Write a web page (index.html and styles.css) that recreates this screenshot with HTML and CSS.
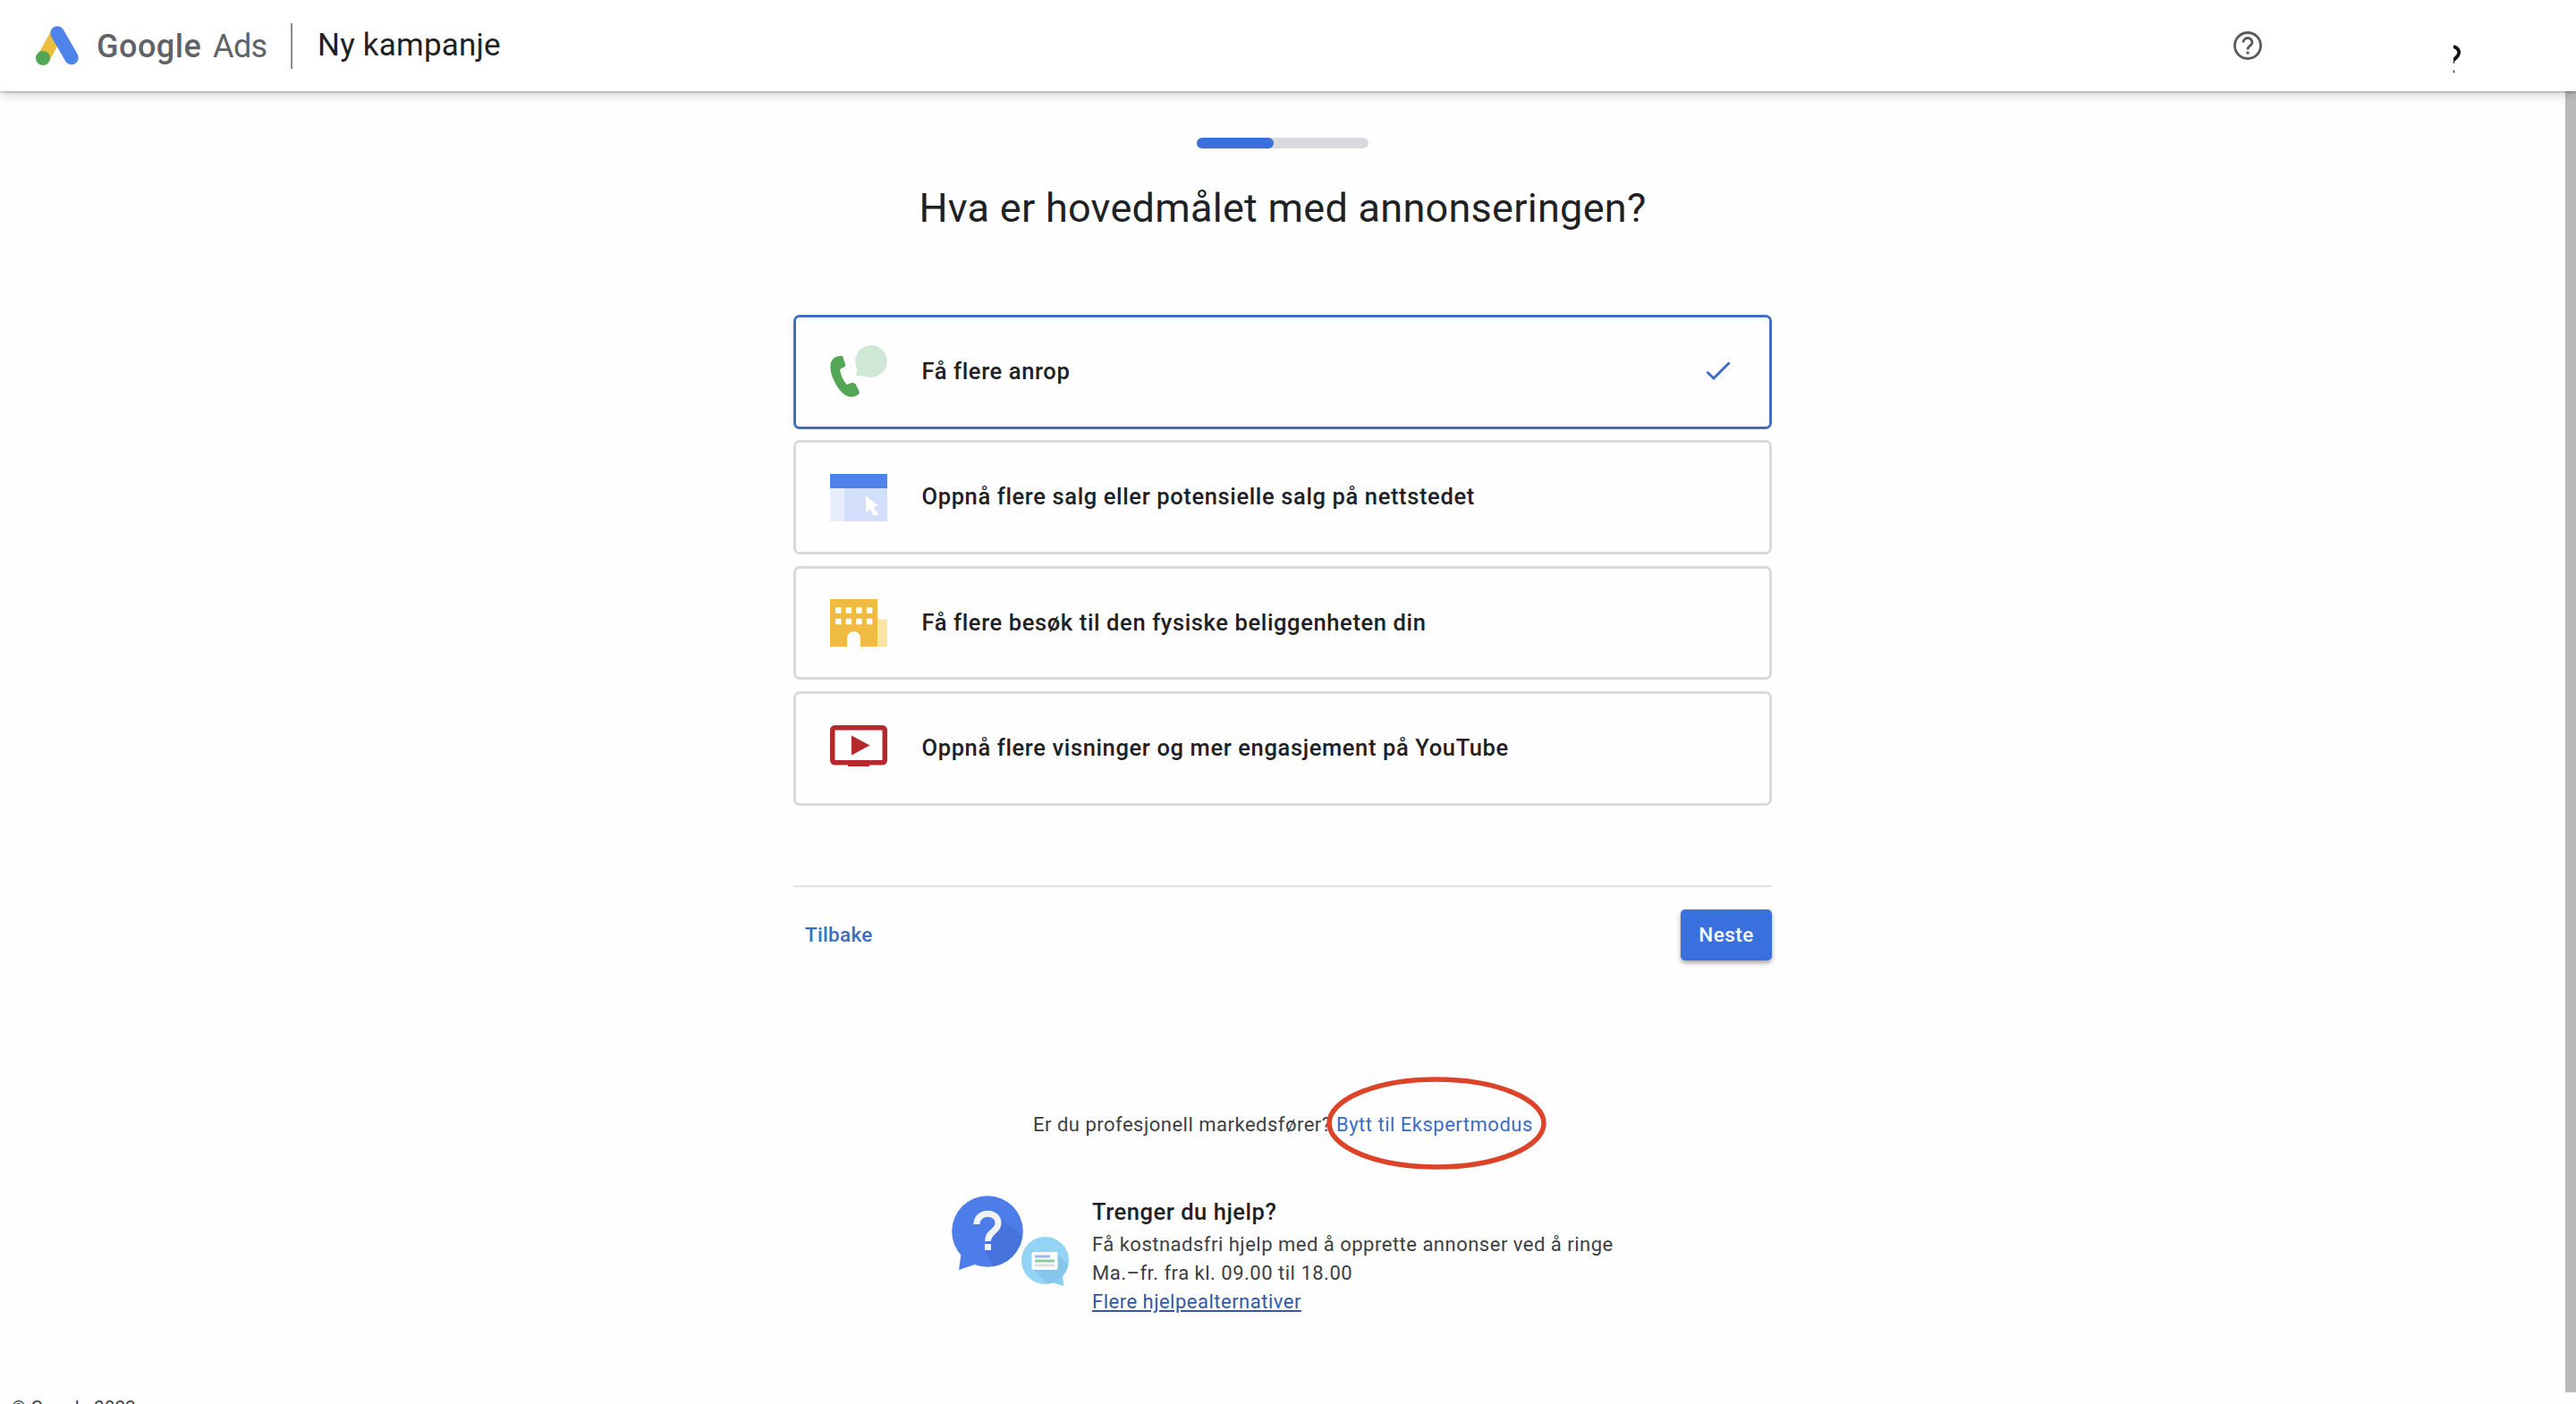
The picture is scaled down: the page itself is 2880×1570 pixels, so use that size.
FILE: index.html
```html
<!DOCTYPE html>
<html lang="no">
<head>
    <meta charset="UTF-8">
    <meta name="viewport" content="width=device-width, initial-scale=1.0">
    <title>Ny kampanje - Google Ads</title>
    <link rel="stylesheet" href="styles.css">
</head>
<body>
<header class="header">
    <svg class="logo" viewBox="0 0 48 44">
        <path d="M24 8 L8.500 36" stroke="#edbd3f" stroke-width="14.500"/>
        <circle cx="8" cy="36" r="8" fill="#53a653"/>
        <path d="M24 8 L40 35.500" stroke="#4f83ec" stroke-width="15.500" stroke-linecap="round"/>
    </svg>
    <span class="brand">Google</span>
    <span class="brand-ads">Ads</span>
    <span class="header-line"></span>
    <h1>Ny kampanje</h1>
    <svg class="help-icon" viewBox="0 0 32 32" fill="none" stroke="#58595c">
        <circle cx="16" cy="16" r="14.500" stroke-width="2.800"/>
        <path d="M11 12.500 A5 5 0 0 1 21 12.500 C21 15.700 16 16.200 16 20.500" stroke-width="2.800"/>
        <path d="M16 22.500 V25.500" stroke-width="3"/>
    </svg>
    <svg class="help-cut" viewBox="0 0 8 34" fill="none" stroke="#111">
        <path d="M0 3 C7 5 8 11 3 15.500 L0 18.500" stroke-width="3.800"/>
        <path d="M.5 18 V22 M.5 29.500 V32.500" stroke-width="1"/>
    </svg>
</header>
<div class="scrollbar"></div>
<main class="content">
    <div class="progress"><div class="progress-done"></div></div>
    <h2>Hva er hovedmålet med annonseringen?</h2>
    <div class="goals">
        <div class="goal selected">
            <svg class="goal-icon" viewBox="0 0 64 64">
                <path d="M45 2 A18 18 0 1 1 40 37 L29 36 L30.500 29 A18 18 0 0 1 45 2 Z" fill="#cfe8d5"/>
                <path d="M11 14 Q13.500 13 14.500 15.500 L17 23 Q18 25.500 15.500 26.500 L11 29 Q12 38 18.500 46 L24.500 44 Q27 43.500 28.500 45.500 L32.500 53.500 Q33.500 56 31 57.500 C24 62 17 60 10 51 C2 40 -1 29 1 21 Q3 15 11 14 Z" fill="#53a653"/>
            </svg>
            <span class="goal-text">Få flere anrop</span>
            <svg class="check" viewBox="0 0 28 22"><path d="M1.500 12 L9 19 L26.500 1.500" fill="none" stroke="#3c6cc4" stroke-width="3"/></svg>
        </div>
        <div class="goal">
            <svg class="goal-icon" viewBox="0 0 64 64">
                <rect y="6" width="64" height="16" fill="#4f82ea"/>
                <rect y="22" width="16" height="37" fill="#e8eefc"/>
                <rect x="16" y="22" width="48" height="37" fill="#d3dffa"/>
                <path d="M39.500 30 L54 41.500 L48.500 43 L54.500 51 L49 53 L45 45.500 L40.500 49 Z" fill="#fff"/>
            </svg>
            <span class="goal-text">Oppnå flere salg eller potensielle salg på nettstedet</span>
        </div>
        <div class="goal">
            <svg class="goal-icon" viewBox="0 0 64 64">
                <rect x="53" y="27.500" width="11" height="30.500" fill="#fbe3a3"/>
                <path d="M0 5 H53 V58 H34 V48.500 A7.500 7.500 0 0 0 19 48.500 V58 H0 Z" fill="#efbc41"/>
                <path d="M6 17.500 H48 M6 30 H48" stroke="#fff" stroke-width="6.500" stroke-dasharray="6.500 5.100"/>
            </svg>
            <span class="goal-text">Få flere besøk til den fysiske beliggenheten din</span>
        </div>
        <div class="goal">
            <svg class="goal-icon" viewBox="0 0 64 64">
                <rect x="2.750" y="8.750" width="58.500" height="39" rx="2.500" fill="none" stroke="#b5282b" stroke-width="5.500"/>
                <rect x="20" y="49" width="24" height="3" fill="#b5282b"/>
                <path d="M24 17.500 L44.500 28.500 L24 39.500 Z" fill="#b5282b"/>
            </svg>
            <span class="goal-text">Oppnå flere visninger og mer engasjement på YouTube</span>
        </div>
    </div>
    <div class="actions">
        <a class="back">Tilbake</a>
        <button class="next">Neste</button>
    </div>
    <div class="expert">
        <span class="question">Er du profesjonell markedsfører?</span>
        <a class="switch-link">Bytt til Ekspertmodus
            <svg class="marker" viewBox="0 0 246 104"><ellipse cx="123" cy="52" rx="120" ry="49" fill="none" stroke="#dd4329" stroke-width="5.500"/></svg>
        </a>
    </div>
    <div class="help">
        <svg class="help-picture" viewBox="0 0 134 104">
            <path d="M11 62 L8 83 L26 77 Z" fill="#4d7de8"/>
            <circle cx="40" cy="40" r="39.800" fill="#4d7de8"/>
            <path d="M53 24 L79 45 A40 40 0 0 1 46 79 L37 61 L43 46 Z" fill="#4573db"/>
            <path d="M28 32 C28 16.500 52 16.500 52 31 C52 40 40.500 40 40.500 51" fill="none" stroke="#f1f3f8" stroke-width="7"/>
            <rect x="37" y="54" width="7" height="7" fill="#f1f3f8"/>
            <path d="M109 96 L125 101 L124 86 Z" fill="#8acdf0"/>
            <circle cx="104.500" cy="72.500" r="26.500" fill="#93d3f3"/>
            <path d="M118 65 L130 77 A26 26 0 0 1 107 98.500 L91 82 Z" fill="#84c5e9"/>
            <rect x="89.500" y="63" width="29" height="20" rx="2.500" fill="#fff"/>
            <path d="M93 68 H110" stroke="#9db7ed" stroke-width="3"/>
            <path d="M93 73 H115" stroke="#8fc9a3" stroke-width="3"/>
            <path d="M93 78 H115" stroke="#dedede" stroke-width="3"/>
        </svg>
        <div class="help-text">
            <h3>Trenger du hjelp?</h3>
            <p>Få kostnadsfri hjelp med å opprette annonser ved å ringe</p>
            <p>Ma.–fr. fra kl. 09.00 til 18.00</p>
            <a class="more">Flere hjelpealternativer</a>
        </div>
    </div>
</main>
<footer>© Google 2022</footer>
</body>
</html>
```
FILE: styles.css
```css
* {
    box-sizing: border-box;
}
body {
    margin: 0;
    height: 1570px;
    overflow: hidden;
    background: #fefefe;
    font-family: Roboto, sans-serif;
    color: #202124;
}
h1, h2, h3, p {
    margin: 0;
    white-space: nowrap;
}
svg {
    display: block;
    flex: none;
    overflow: visible;
}
.header {
    position: relative;
    display: flex;
    align-items: center;
    height: 102px;
    padding-left: 40px;
    background: #fff;
    box-shadow: 0 0 3px rgba(0, 0, 0, 0.5), 0 3px 12px rgba(0, 0, 0, 0.2);
    z-index: 1;
}
.logo {
    width: 48px;
    height: 44px;
    fill: none;
}
.brand, .brand-ads {
    padding-top: 2px;
    color: #5f6368;
    font-size: 36px;
    line-height: 42px;
}
.brand {
    width: 118px;
    margin-left: 20px;
    font-weight: 500;
    letter-spacing: 0.5px;
}
.brand-ads {
    width: 60px;
    margin-left: 12px;
    letter-spacing: -0.6px;
}
.header-line {
    width: 2px;
    height: 51px;
    margin-left: 27px;
    background: #8a8c8f;
}
h1 {
    margin-left: 28px;
    font-size: 35px;
    line-height: 42px;
    font-weight: 400;
    letter-spacing: 0.2px;
}
.help-icon {
    width: 32px;
    height: 32px;
    margin-left: auto;
}
.help-cut {
    width: 8px;
    height: 34px;
    margin: 30px 129px 0 214px;
    overflow: hidden;
}
.scrollbar {
    position: absolute;
    top: 102px;
    right: 0;
    width: 12px;
    height: 1455px;
    background: #bababa;
}
.content {
    width: 1094px;
    margin-left: 887px;
}
.progress {
    width: 192px;
    height: 12px;
    margin: 52px auto 0;
    border-radius: 6px;
    background: #dadade;
}
.progress-done {
    width: 86px;
    height: 12px;
    border-radius: 6px;
    background: #3970de;
}
h2 {
    margin-top: 39px;
    text-align: center;
    font-size: 45px;
    line-height: 56px;
    font-weight: 400;
    letter-spacing: 0.28px;
}
.goals {
    display: flex;
    flex-direction: column;
    gap: 12.9px;
    margin-top: 91px;
}
.goal {
    display: flex;
    align-items: center;
    height: 127.5px;
    padding: 0 43px 0 38px;
    border: 3px solid #dadada;
    border-radius: 7px;
}
.goal.selected {
    border-color: #416fbd;
}
.goal-icon {
    width: 64px;
    height: 64px;
}
.goal-text {
    margin: -2px 0 0 38.5px;
    font-size: 25.5px;
    line-height: 32px;
    font-weight: 500;
    letter-spacing: 0.63px;
    white-space: nowrap;
}
.check {
    width: 28px;
    height: 22px;
    margin: -2px 0 0 auto;
}
.actions {
    display: flex;
    align-items: center;
    justify-content: space-between;
    margin-top: 89px;
    padding: 25px 0 0 13px;
    border-top: 2px solid #e2e3e4;
}
.back {
    color: #3c6cc4;
    font-size: 22.5px;
    font-weight: 500;
    letter-spacing: 0.3px;
}
.next {
    width: 102px;
    height: 57px;
    padding: 0;
    border: none;
    border-radius: 5px;
    background: #3970de;
    box-shadow: 0 3px 5px rgba(0, 0, 0, 0.35);
    color: #fff;
    font-family: inherit;
    font-size: 22.5px;
    font-weight: 500;
    letter-spacing: 0.5px;
}
.expert {
    display: flex;
    margin: 171px 0 0 268px;
    font-size: 22px;
    line-height: 26px;
    letter-spacing: 0.5px;
    color: #3c4043;
    white-space: nowrap;
}
.question {
    width: 339px;
}
.switch-link {
    position: relative;
    color: #3c6cc4;
}
.marker {
    position: absolute;
    left: -11px;
    top: -41px;
    width: 246px;
    height: 104px;
}
.help {
    display: flex;
    margin: 66px 0 0 177px;
}
.help-picture {
    width: 134px;
    height: 104px;
}
.help-text {
    margin-left: 23px;
    font-size: 22px;
    line-height: 32px;
    letter-spacing: 0.5px;
    color: #3c4043;
    white-space: nowrap;
}
h3 {
    margin-bottom: 2px;
    color: #202124;
    font-size: 25.5px;
    line-height: 37px;
    font-weight: 500;
    letter-spacing: 0.55px;
}
.more {
    color: #3358a4;
    text-decoration: underline;
}
/* the page is cut off just below the top of this line */
footer {
    position: absolute;
    left: 13px;
    top: 1562px;
    font-size: 20px;
    line-height: 24px;
    letter-spacing: 0.4px;
    color: #3c4043;
}
```
